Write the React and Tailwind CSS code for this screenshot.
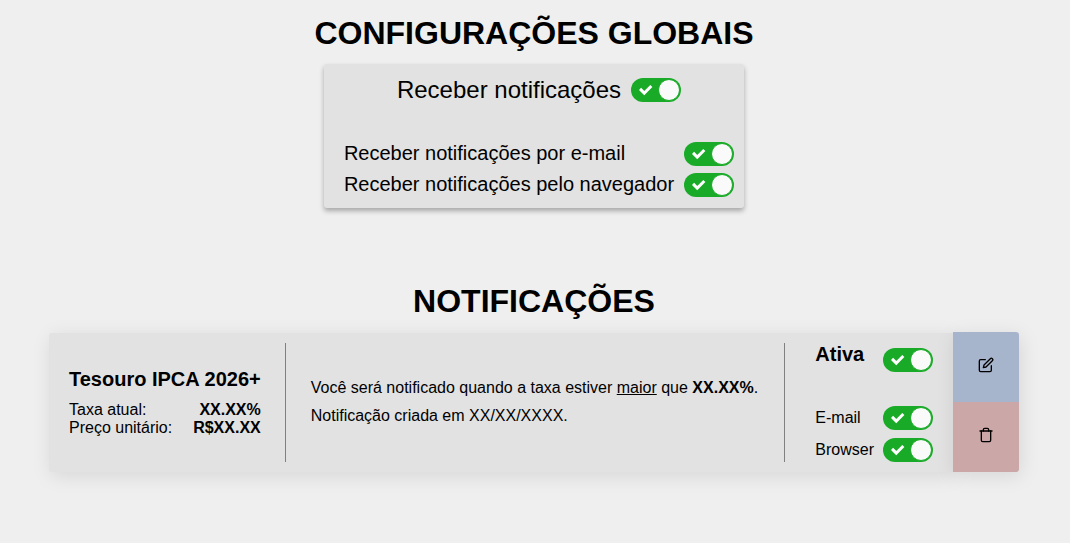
import { useState } from "react";
import { FiEdit, FiTrash } from "react-icons/fi";

function Toggle({ id }) {
  const [on, setOn] = useState(true);
  return (
    <span className="relative block h-6 w-[50px] shrink-0">
      <input
        id={id}
        type="checkbox"
        checked={on}
        onChange={(e) => setOn(e.target.checked)}
        className="peer block h-6 w-[50px] cursor-pointer appearance-none rounded-full bg-[#4d4d4d] checked:bg-[#19ab27]"
      />
      <svg
        viewBox="0 0 14 11"
        className="pointer-events-none absolute top-[7px] left-2 h-[11px] w-[14px] fill-white opacity-0 peer-checked:opacity-100"
      >
        <path d="M11.264 0L5.26 6.004 2.103 2.847 0 4.95l5.26 5.26 8.108-8.107L11.264 0" />
      </svg>
      <span className="pointer-events-none absolute top-px left-px size-[22px] rounded-full border border-[#4d4d4d] bg-[#fafafa] peer-checked:left-[27px] peer-checked:border-[#19ab27]" />
    </span>
  );
}

function GlobalSettings() {
  return (
    <section className="flex flex-col items-center">
      <h1 className="text-center text-[32px] leading-9 font-bold">CONFIGURAÇÕES GLOBAIS</h1>
      <div className="mt-[13px] flex flex-col rounded-[3px] bg-[#e2e2e2] pt-[14px] pr-[10px] pb-[11px] pl-5 shadow-[0_3px_5px_rgba(0,0,0,0.3)]">
        <div className="flex items-center justify-center gap-[10px]">
          <label htmlFor="all" className="text-2xl leading-6">Receber notificações</label>
          <Toggle id="all" />
        </div>
        <div className="mt-10 flex flex-col gap-[7px] text-xl leading-[22px]">
          <div className="flex items-start justify-between gap-[10px]">
            <label htmlFor="all-email">Receber notificações por e-mail</label>
            <Toggle id="all-email" />
          </div>
          <div className="flex items-start justify-between gap-[10px]">
            <label htmlFor="all-browser">Receber notificações pelo navegador</label>
            <Toggle id="all-browser" />
          </div>
        </div>
      </div>
    </section>
  );
}

function NotificationCard() {
  return (
    <article className="flex">
      <div className="mt-px flex min-w-0 flex-1 rounded-l-[3px] bg-[#e2e2e2] px-5 py-[10px] shadow-[2px_4px_20px_rgba(0,0,0,0.1)]">
        <div className="flex flex-col justify-center pr-6">
          <h2 className="text-xl leading-[22px] font-bold whitespace-nowrap">Tesouro IPCA 2026+</h2>
          <dl className="mt-[11px] text-base leading-[18px]">
            <div className="flex justify-between">
              <dt>Taxa atual:</dt>
              <dd className="font-bold">XX.XX%</dd>
            </div>
            <div className="flex justify-between">
              <dt>Preço unitário:</dt>
              <dd className="font-bold">R$XX.XX</dd>
            </div>
          </dl>
        </div>
        <div className="flex flex-1 flex-col justify-center border-x border-[#808080] pr-5 pb-px pl-[25px] text-base leading-7">
          <p>
            Você será notificado quando a taxa estiver <u>maior</u> que <strong>XX.XX%</strong>.
          </p>
          <p>Notificação criada em XX/XX/XXXX.</p>
        </div>
        <div className="flex flex-col justify-between gap-[34px] pl-[30px] leading-6">
          <div className="flex items-start justify-between gap-[9px]">
            <label htmlFor="active" className="text-xl leading-[22px] font-bold">Ativa</label>
            <div className="pt-[5px]">
              <Toggle id="active" />
            </div>
          </div>
          <div className="flex flex-col gap-2">
            <div className="flex items-start justify-between gap-[9px]">
              <label htmlFor="email">E-mail</label>
              <Toggle id="email" />
            </div>
            <div className="flex items-start justify-between gap-[9px]">
              <label htmlFor="browser">Browser</label>
              <Toggle id="browser" />
            </div>
          </div>
        </div>
      </div>
      <div className="flex w-[66px] shrink-0 flex-col rounded-r-[3px] shadow-[2px_4px_20px_rgba(0,0,0,0.1)]">
        <button type="button" aria-label="Editar" className="flex flex-1 items-center justify-center rounded-tr-[3px] bg-[#a7b5cc] pb-1">
          <FiEdit size={16} />
        </button>
        <button type="button" aria-label="Excluir" className="flex flex-1 items-center justify-center rounded-br-[3px] bg-[#cca7a7] pb-1">
          <FiTrash size={16} />
        </button>
      </div>
    </article>
  );
}

export default function App() {
  return (
    <main className="min-h-screen bg-[#efefef] pt-[15px] pr-[51px] pb-[71px] pl-[49px] font-['Liberation_Sans',Arial,sans-serif] text-black">
      <GlobalSettings />
      <section className="mt-[75px]">
        <h1 className="mb-[13px] text-center text-[32px] leading-9 font-bold">NOTIFICAÇÕES</h1>
        <NotificationCard />
      </section>
    </main>
  );
}
